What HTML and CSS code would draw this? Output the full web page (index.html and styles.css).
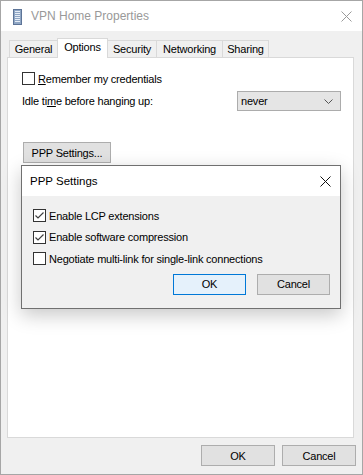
FILE: index.html
```html
<!DOCTYPE html>
<html lang="en">
  <head>
    <meta charset="utf-8" />
    <title>VPN Home Properties</title>
    <link rel="stylesheet" href="styles.css">
  </head>
  <body>
    <!-- Properties window -->
    <div class="window">
      <div class="titlebar">
        <svg class="app-icon" width="10" height="16" viewBox="0 0 10 16">
          <rect x="0.5" y="0.5" width="8" height="15" fill="#8fa6c4" stroke="#5d7497" />
          <rect x="2" y="2" width="5" height="1" fill="#e6edf6" />
          <rect x="2" y="4" width="5" height="1" fill="#e6edf6" />
          <rect x="2" y="6" width="5" height="1" fill="#e6edf6" />
          <rect x="2" y="8" width="5" height="1" fill="#e6edf6" />
          <rect x="2" y="10" width="5" height="1" fill="#e6edf6" />
          <rect x="2" y="12" width="5" height="1" fill="#e6edf6" />
        </svg>
        <span class="title">VPN Home Properties</span>
        <svg class="close" width="11" height="11" viewBox="0 0 11 11">
          <path d="M0.5 0.5 L10.5 10.5 M10.5 0.5 L0.5 10.5" stroke="#9a9a9a" stroke-width="1" />
        </svg>
      </div>

      <!-- Tab strip -->
      <div class="tabs">
        <div class="tab tab-general">General</div>
        <div class="tab tab-options active">Options</div>
        <div class="tab tab-security">Security</div>
        <div class="tab tab-networking">Networking</div>
        <div class="tab tab-sharing">Sharing</div>
      </div>

      <div class="panel">
        <div class="check-row">
          <span class="box"></span>
          <span><u>R</u>emember my credentials</span>
        </div>
        <div class="idle-row">
          <span>Idle ti<u>m</u>e before hanging up:</span>
          <div class="select">
            <span>never</span>
            <svg width="9" height="5" viewBox="0 0 9 5">
              <path d="M0.5 0.5 L4.5 4.5 L8.5 0.5" fill="none" stroke="#555" />
            </svg>
          </div>
        </div>
        <button class="btn ppp-btn">PPP Settin<u>g</u>s...</button>
      </div>

      <div class="footer">
        <button class="btn">OK</button>
        <button class="btn">Cancel</button>
      </div>

      <!-- PPP Settings dialog on top -->
      <div class="dialog">
        <div class="dialog-title">
          <span>PPP Settings</span>
          <svg width="11" height="11" viewBox="0 0 11 11">
            <path d="M0.5 0.5 L10.5 10.5 M10.5 0.5 L0.5 10.5" stroke="#111" stroke-width="1" />
          </svg>
        </div>
        <div class="dialog-body">
          <div class="dlg-check">
            <span class="box checked">
              <svg width="11" height="11" viewBox="0 0 11 11">
                <path d="M1.5 5.5 L4 8 L9.5 2.5" fill="none" stroke="#404040" stroke-width="1.2" />
              </svg>
            </span>
            <span>Enable LCP extensions</span>
          </div>
          <div class="dlg-check">
            <span class="box checked">
              <svg width="11" height="11" viewBox="0 0 11 11">
                <path d="M1.5 5.5 L4 8 L9.5 2.5" fill="none" stroke="#404040" stroke-width="1.2" />
              </svg>
            </span>
            <span>Enable software compression</span>
          </div>
          <div class="dlg-check">
            <span class="box"></span>
            <span>Negotiate multi-link for single-link connections</span>
          </div>
          <div class="dialog-buttons">
            <button class="btn default">OK</button>
            <button class="btn">Cancel</button>
          </div>
        </div>
      </div>
    </div>
  </body>
</html>
```

FILE: styles.css
```css
/* Page reset */
body {
  margin: 0;
  font-family: "Liberation Sans", Arial, sans-serif;
  font-size: 11px;
  letter-spacing: -0.2px;
  color: #000;
}

/* Outer window frame */
.window {
  position: relative;
  box-sizing: border-box;
  width: 363px;
  height: 475px;
  border: 1px solid #a6a6a6;
  background: #f0f0f0;
  display: flex;
  flex-direction: column;
}

/* Title bar */
.titlebar {
  height: 30px;
  background: #fff;
  display: flex;
  align-items: center;
  padding: 0 10px 0 12px;
}

.app-icon {
  margin-top: 1px;
}

.titlebar .title {
  margin-left: 8px;
  font-size: 12px;
  letter-spacing: 0;
  color: #999;
  flex: 1;
}

/* Tabs */
.tabs {
  display: flex;
  align-items: flex-end;
  height: 19px;
  margin-top: 7px;
  padding-left: 8px;
  position: relative;
  z-index: 1;
}

.tab {
  box-sizing: border-box;
  height: 17px;
  border: 1px solid #d9d9d9;
  border-bottom: none;
  border-right: none;
  text-align: center;
  line-height: 17px;
}

.tab.active {
  height: 20px;
  margin-bottom: -1px;
  background: #fff;
  border-right: 1px solid #d9d9d9;
  line-height: 17px;
}

.tab.active + .tab {
  border-left: none;
}

.tab-sharing {
  border-right: 1px solid #d9d9d9;
}

.tab-general { width: 48px; }
.tab-options { width: 51px; }
.tab-security { width: 48px; }
.tab-networking { width: 66px; }
.tab-sharing { width: 47px; }

/* Tab panel */
.panel {
  box-sizing: border-box;
  margin-left: 6px;
  width: 347px;
  height: 381px;
  background: #fff;
  border: 1px solid #d9d9d9;
  padding: 14px 12px 0 14px;
}

.box {
  box-sizing: border-box;
  display: inline-flex;
  align-items: center;
  justify-content: center;
  width: 13px;
  height: 13px;
  border: 1px solid #333;
  background: #fff;
}

.check-row {
  display: flex;
  align-items: center;
  gap: 3px;
  height: 13px;
}

.idle-row {
  display: flex;
  align-items: center;
  justify-content: space-between;
  margin-top: 6px;
}

.select {
  box-sizing: border-box;
  width: 104px;
  height: 20px;
  background: #e5e5e5;
  border: 1px solid #acacac;
  display: flex;
  align-items: center;
  justify-content: space-between;
  padding: 0 7px 0 3px;
}

/* Push buttons */
.btn {
  box-sizing: border-box;
  width: 74px;
  height: 21px;
  background: #e1e1e1;
  border: 1px solid #adadad;
  font-family: inherit;
  font-size: inherit;
  letter-spacing: inherit;
  color: #000;
  padding: 0;
}

.btn.default {
  background: #e5f1fb;
  border-color: #0078d7;
}

.ppp-btn {
  width: 88px;
  margin-top: 31px;
  margin-left: 1px;
}

/* Bottom buttons */
.footer {
  display: flex;
  justify-content: flex-end;
  gap: 7px;
  padding: 7px 6px 0 0;
}

/* Modal dialog */
.dialog {
  position: absolute;
  left: 20px;
  top: 164px;
  box-sizing: border-box;
  width: 320px;
  height: 144px;
  border: 1px solid #707070;
  background: #f0f0f0;
  box-shadow: 0 6px 18px rgba(0, 0, 0, 0.22);
  z-index: 2;
}

.dialog-title {
  height: 30px;
  background: #fff;
  display: flex;
  align-items: center;
  justify-content: space-between;
  padding: 0 9px 0 8px;
  font-size: 11.5px;
  letter-spacing: 0;
}

.dialog-body {
  padding: 13px 10px 0 11px;
}

.dlg-check {
  display: flex;
  align-items: center;
  gap: 3px;
  height: 13px;
  margin-bottom: 8.5px;
}

.dialog-buttons {
  display: flex;
  justify-content: flex-end;
  gap: 11px;
  margin-top: 4px;
}

.dialog-buttons .btn {
  width: 73px;
}
```
